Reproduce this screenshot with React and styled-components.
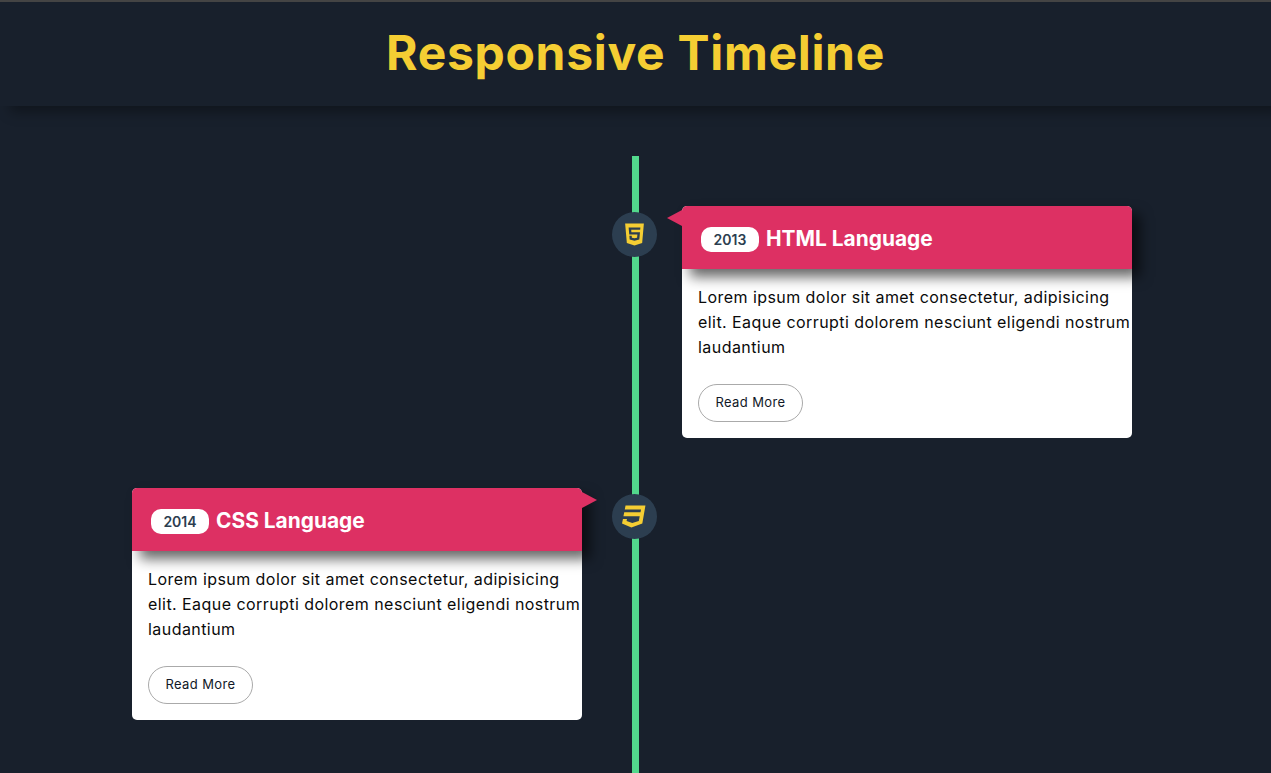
import React from "react";
import styled, { createGlobalStyle } from "styled-components";
import { FaHtml5, FaCss3 } from "react-icons/fa";

const GlobalStyle = createGlobalStyle`
    * {
        box-sizing: border-box;
    }
    body {
        margin: 0;
        background: #18202c;
        font-family: Inter, "Liberation Sans", sans-serif;
    }
`;

const entries = [
    { year: "2013", title: "HTML Language", icon: <FaHtml5 />, side: "right" },
    { year: "2014", title: "CSS Language", icon: <FaCss3 />, side: "left" },
];

const App = () => {
    return (
        <>
            <GlobalStyle />
            <Header>
                <Title>Responsive Timeline</Title>
            </Header>
            <Timeline>
                {entries.map((entry) => (
                    <Row key={entry.year}>
                        <Card $side={entry.side}>
                            <CardHead $side={entry.side}>
                                <Year>{entry.year}</Year>
                                <CardTitle>{entry.title}</CardTitle>
                            </CardHead>
                            <CardBody>
                                <Text>
                                    Lorem ipsum dolor sit amet consectetur, adipisicing elit. Eaque corrupti dolorem nesciunt eligendi nostrum laudantium
                                </Text>
                                <ReadMore href="#">Read More</ReadMore>
                            </CardBody>
                        </Card>
                        <Badge>{entry.icon}</Badge>
                    </Row>
                ))}
            </Timeline>
        </>
    );
};

const Header = styled.header`
    height: 106px;
    display: flex;
    align-items: center;
    justify-content: center;
    padding-bottom: 3px;
    background: #18202c;
    border-top: 2px solid #444;
    box-shadow: 10px 6px 12px rgba(0, 0, 0, 0.35);
`;

const Title = styled.h1`
    margin: 0;
    font-size: 48px;
    font-weight: 700;
    letter-spacing: 0.7px;
    color: #f5ce33;
`;

const Timeline = styled.main`
    position: relative;
    width: 1000px;
    margin: 50px 0 0 132px;
    padding: 50px 0 53px;
    display: flex;
    flex-direction: column;
    gap: 50px;

    &::before {
        content: "";
        position: absolute;
        top: 0;
        bottom: 0;
        left: 500px;
        width: 7px;
        background: #52d88c;
    }
`;

const Row = styled.section`
    position: relative;
    display: flex;
`;

const Card = styled.article`
    width: 450px;
    margin-left: ${({ $side }) => ($side === "right" ? "550px" : "0")};
    background: #fff;
    border-radius: 5px;
`;

const CardHead = styled.div`
    position: relative;
    height: 63px;
    display: flex;
    align-items: center;
    gap: 7px;
    padding: 1px 0 0 19px;
    background: #dd3063;
    border-radius: 5px 5px 0 0;
    box-shadow: 8px 8px 13px rgba(0, 0, 0, 0.6);

    &::before {
        content: "";
        position: absolute;
        top: 4px;
        ${({ $side }) => ($side === "right" ? "right: 100%;" : "left: 100%;")}
        border-style: solid;
        border-width: 8px 15px;
        border-color: transparent;
        ${({ $side }) =>
            $side === "right"
                ? "border-left-width: 0; border-right-color: #dd3063;"
                : "border-right-width: 0; border-left-color: #dd3063;"}
    }
`;

const Year = styled.span`
    width: 58px;
    height: 25px;
    margin-top: 3px;
    display: flex;
    align-items: center;
    justify-content: center;
    background: #fff;
    border-radius: 10px;
    font-size: 14px;
    font-weight: 600;
    color: #2c3e50;
`;

const CardTitle = styled.h2`
    margin: 0;
    font-size: 20.9px;
    font-weight: 700;
    color: #fff;
`;

const CardBody = styled.div`
    padding: 16px 0 16px 16px;
`;

const Text = styled.p`
    margin: 0 0 24px;
    font-size: 16px;
    line-height: 25px;
    letter-spacing: 0.44px;
    color: #0a0a0a;
`;

const ReadMore = styled.a`
    width: 105px;
    height: 38px;
    display: flex;
    align-items: center;
    justify-content: center;
    padding-bottom: 2px;
    border: 1px solid #aaa;
    border-radius: 20px;
    font-size: 13px;
    letter-spacing: 0.4px;
    color: #111827;
    text-decoration: none;
`;

const Badge = styled.div`
    position: absolute;
    top: 6px;
    left: 480px;
    width: 45px;
    height: 45px;
    display: flex;
    align-items: center;
    justify-content: center;
    border-radius: 50%;
    background: #2c3e50;
    color: #f5ce33;
    font-size: 25px;
`;

export default App;
